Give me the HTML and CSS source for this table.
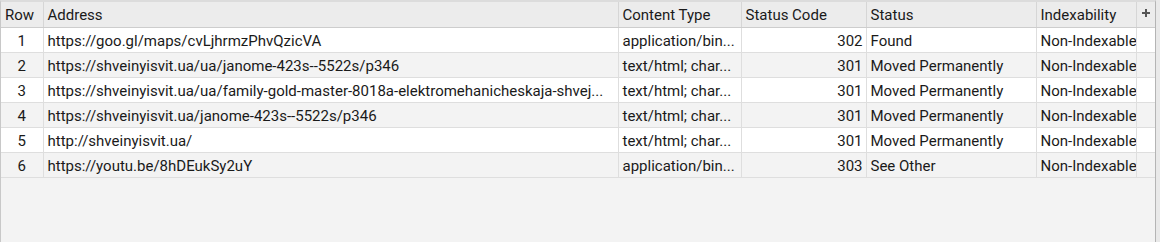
FILE: index.html
```html
<!DOCTYPE html>
<html lang="en">
<head>
    <meta charset="UTF-8">
    <title>Internal Crawl Results</title>
    <link rel="stylesheet" href="styles.css">
</head>
<body>
    <div class="grid-wrap">
        <table class="grid">
            <colgroup>
                <col class="c-row">
                <col class="c-addr">
                <col class="c-type">
                <col class="c-code">
                <col class="c-status">
                <col class="c-index">
                <col class="c-add">
            </colgroup>
            <thead>
                <tr>
                    <th>Row</th>
                    <th>Address</th>
                    <th>Content Type</th>
                    <th>Status Code</th>
                    <th>Status</th>
                    <th>Indexability</th>
                    <th class="add-col">
                        <svg width="8" height="8" viewBox="0 0 8 8"><path d="M3 0h2v3h3v2H5v3H3V5H0V3h3z" fill="#555"/></svg>
                    </th>
                </tr>
            </thead>
            <tbody>
                <tr>
                    <td class="num">1</td>
                    <td>https://goo.gl/maps/cvLjhrmzPhvQzicVA</td>
                    <td>application/bin...</td>
                    <td class="code">302</td>
                    <td>Found</td>
                    <td class="idx">Non-Indexable</td>
                    <td></td>
                </tr>
                <tr>
                    <td class="num">2</td>
                    <td>https://shveinyisvit.ua/ua/janome-423s--5522s/p346</td>
                    <td>text/html; char...</td>
                    <td class="code">301</td>
                    <td>Moved Permanently</td>
                    <td class="idx">Non-Indexable</td>
                    <td></td>
                </tr>
                <tr>
                    <td class="num">3</td>
                    <td>https://shveinyisvit.ua/ua/family-gold-master-8018a-elektromehanicheskaja-shvej...</td>
                    <td>text/html; char...</td>
                    <td class="code">301</td>
                    <td>Moved Permanently</td>
                    <td class="idx">Non-Indexable</td>
                    <td></td>
                </tr>
                <tr>
                    <td class="num">4</td>
                    <td>https://shveinyisvit.ua/janome-423s--5522s/p346</td>
                    <td>text/html; char...</td>
                    <td class="code">301</td>
                    <td>Moved Permanently</td>
                    <td class="idx">Non-Indexable</td>
                    <td></td>
                </tr>
                <tr>
                    <td class="num">5</td>
                    <td>http://shveinyisvit.ua/</td>
                    <td>text/html; char...</td>
                    <td class="code">301</td>
                    <td>Moved Permanently</td>
                    <td class="idx">Non-Indexable</td>
                    <td></td>
                </tr>
                <tr>
                    <td class="num">6</td>
                    <td>https://youtu.be/8hDEukSy2uY</td>
                    <td>application/bin...</td>
                    <td class="code">303</td>
                    <td>See Other</td>
                    <td class="idx">Non-Indexable</td>
                    <td></td>
                </tr>
            </tbody>
        </table>
    </div>
</body>
</html>
```

FILE: styles.css
```css
body {
    margin: 0;
    background-color: #e9e9e9;
    font-family: Roboto, "Liberation Sans", sans-serif;
    font-size: 15px;
    color: #1a1a1a;
}

.grid-wrap {
    width: 1154px;
    height: 240px;
    background-color: #f3f3f3;
    border-top: 2px solid #dcdcdc;
    border-left: 1px solid #c8c8c8;
    border-right: 1px solid #b4b4b4;
}

.grid {
    table-layout: fixed;
    border-collapse: collapse;
    width: 1154px;
}

.c-row { width: 42px; }
.c-addr { width: 575px; }
.c-type { width: 123px; }
.c-code { width: 125px; }
.c-status { width: 170px; }
.c-index { width: 100px; }
.c-add { width: 19px; }

th {
    height: 24px;
    padding: 1px 4px 0;
    background-color: #ececec;
    border-right: 1px solid #d6d6d6;
    border-bottom: 1px solid #cdcdcd;
    font-weight: normal;
    text-align: left;
    white-space: nowrap;
    overflow: hidden;
}

th.add-col {
    padding: 0;
    text-align: center;
    border-right: none;
}

th.add-col svg {
    display: block;
    margin: 0 auto 4px;
}

td {
    height: 23px;
    padding: 1px 4px 0;
    border-right: 1px solid #dedede;
    border-bottom: 1px solid #dedede;
    white-space: nowrap;
    overflow: hidden;
    text-overflow: ellipsis;
}

td:last-child {
    border-right: none;
}

tbody tr:nth-child(odd) {
    background-color: #ffffff;
}

tbody tr:nth-child(even) {
    background-color: #f3f3f3;
}

td.num {
    text-align: center;
}

td.code {
    text-align: right;
    padding-right: 3px;
}

td.idx {
    padding-right: 0;
    text-overflow: clip;
}
```
